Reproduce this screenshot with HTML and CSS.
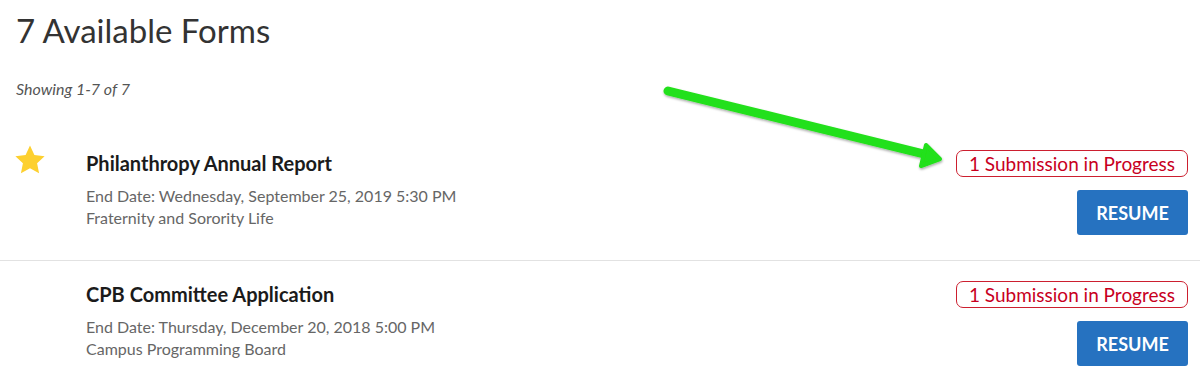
FILE: index.html
```html
<!DOCTYPE html>
<html>
<head>
<meta charset="utf-8">
<link rel="stylesheet" href="styles.css">
</head>
<body>
<div class="page">
  <h1 class="heading">7 Available Forms</h1>
  <p class="showing">Showing 1-7 of 7</p>
  <div class="list">
    <div class="row">
      <div class="fav">
        <svg width="34" height="34" viewBox="0 0 24 24"><path fill="#fdd02f" d="M12 1.8l3.1 6.6 7.2.9-5.3 5 1.4 7.1L12 17.9l-6.4 3.5L7 14.3l-5.3-5 7.2-.9z"/></svg>
      </div>
      <div class="info">
        <div class="title">Philanthropy Annual Report</div>
        <div class="meta">End Date: Wednesday, September 25, 2019 5:30 PM</div>
        <div class="meta">Fraternity and Sorority Life</div>
      </div>
      <div class="actions">
        <span class="badge">1 Submission in Progress</span>
        <button class="btn">RESUME</button>
      </div>
    </div>
    <div class="row">
      <div class="fav"></div>
      <div class="info">
        <div class="title">CPB Committee Application</div>
        <div class="meta">End Date: Thursday, December 20, 2018 5:00 PM</div>
        <div class="meta">Campus Programming Board</div>
      </div>
      <div class="actions">
        <span class="badge">1 Submission in Progress</span>
        <button class="btn">RESUME</button>
      </div>
    </div>
  </div>
  <svg class="arrow" width="1200" height="390" viewBox="0 0 1200 390">
    <defs>
      <filter id="sh" x="-10%" y="-50%" width="120%" height="200%">
        <feDropShadow dx="0.5" dy="1.5" stdDeviation="1.2" flood-color="#000" flood-opacity="0.35"/>
      </filter>
    </defs>
    <g filter="url(#sh)">
      <line x1="668" y1="91" x2="928" y2="155" stroke="#22e01a" stroke-width="9" stroke-linecap="round"/>
      <polygon points="926,145 940,159 921,166" fill="#22e01a" stroke="#22e01a" stroke-width="4" stroke-linejoin="round"/>
    </g>
  </svg>
</div>
</body>
</html>
```
FILE: styles.css
```css
* { box-sizing: border-box; }
html, body { margin: 0; padding: 0; background: #fff; }
body { font-family: "Source Sans Pro", Lato, "Liberation Sans", sans-serif; color: #333; }
.page { position: relative; width: 1200px; height: 390px; overflow: hidden; }
.heading {
  margin: 0;
  padding: 10px 0 0 16px;
  font-size: 33px;
  font-weight: 400;
  line-height: 40px;
  color: #333;
}
.showing {
  margin: 0;
  padding: 28px 0 0 16px;
  font-size: 16px;
  font-style: italic;
  line-height: 22px;
  color: #555;
}
.list { margin-top: 30px; }
.row {
  display: flex;
  align-items: flex-start;
  padding: 20px 12px 25px 16px;
  border-bottom: 1px solid #e2e2e2;
}
.row:last-child { border-bottom: none; }
.fav { width: 70px; flex: none; }
.fav svg { display: block; margin: -7px 0 0 -3px; }
.info { flex: 1; }
.title {
  font-size: 20px;
  font-weight: 700;
  line-height: 26px;
  color: #1b1b1b;
}
.meta {
  font-size: 16px;
  line-height: 22px;
  color: #666;
}
.title + .meta { margin-top: 9px; }
.actions {
  display: flex;
  flex-direction: column;
  align-items: flex-end;
  gap: 13px;
}
.badge {
  display: block;
  border: 1px solid #cc1f2f;
  border-radius: 7px;
  color: #c8001e;
  font-size: 19px;
  line-height: 25px;
  padding: 0 12px;
}
.btn {
  width: 111px;
  height: 45px;
  border: none;
  border-radius: 3px;
  background: #2672c0;
  color: #fff;
  font-family: inherit;
  font-size: 18px;
  font-weight: 700;
  padding: 0;
}
.arrow { position: absolute; left: 0; top: 0; pointer-events: none; }
```
